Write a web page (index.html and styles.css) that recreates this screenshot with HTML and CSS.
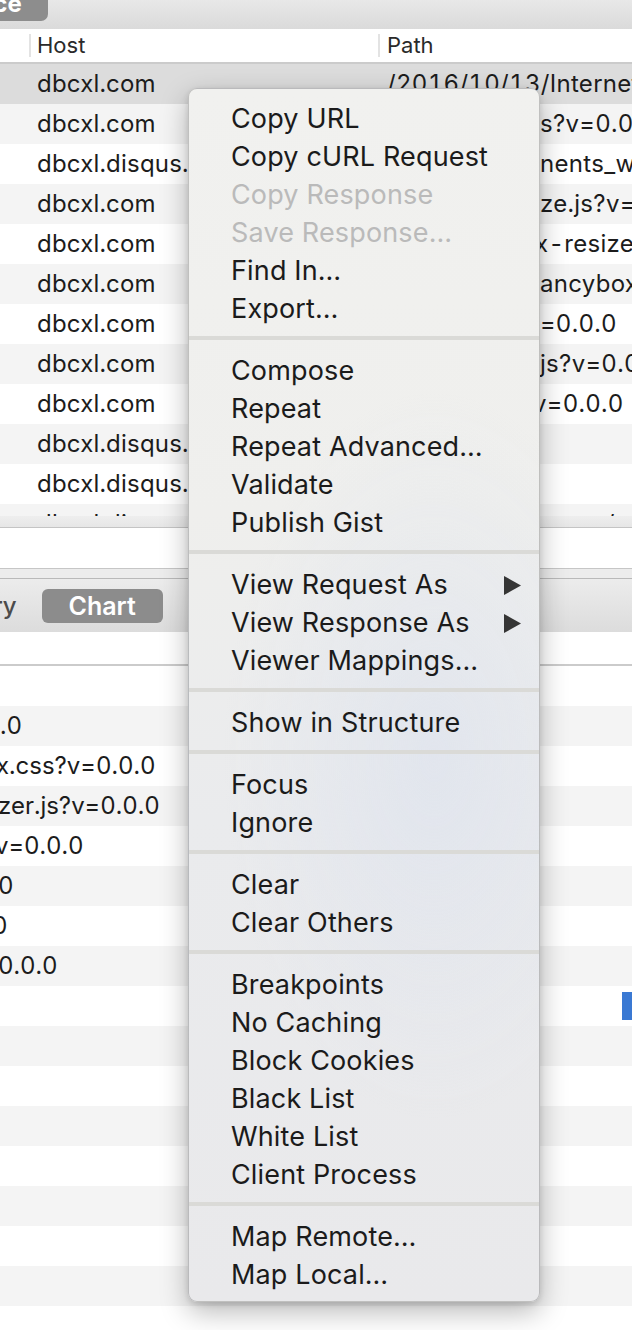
FILE: index.html
```html
<!DOCTYPE html>
<html lang="en">
<head>
<meta charset="utf-8">
<title>Charles – Sequence</title>
<link rel="stylesheet" href="styles.css">
</head>
<body>
<div class="app">
  <div class="toolbar">
    <span class="seg">Sequence</span>
  </div>

  <div class="thead">
    <div class="th th-icon"></div>
    <div class="th th-host">Host</div>
    <div class="th th-path">Path</div>
  </div>

  <div class="tbody upper">
    <div class="row selected"><div class="td td-icon"></div><div class="td td-host">dbcxl.com</div><div class="td td-path">/2016/10/13/Internet-Explorer-11/</div></div>
    <div class="row"><div class="td td-icon"></div><div class="td td-host">dbcxl.com</div><div class="td td-path"><span class="under">/wp-content/themes/dbcxl/main.j</span>s?v=0.0.0</div></div>
    <div class="row"><div class="td td-icon"></div><div class="td td-host">dbcxl.disqus.com</div><div class="td td-path"><span class="under">/count-data.js?1=com</span>nents_widget</div></div>
    <div class="row"><div class="td td-icon"></div><div class="td td-host">dbcxl.com</div><div class="td td-path"><span class="under">/wp-content/js/autosi</span>ze.js?v=0.0.0</div></div>
    <div class="row"><div class="td td-icon"></div><div class="td td-host">dbcxl.com</div><div class="td td-path"><span class="under part-a">/wp-content/js/fancybo</span>x-resizer.js</div></div>
    <div class="row"><div class="td td-icon"></div><div class="td td-host">dbcxl.com</div><div class="td td-path"><span class="under">/wp-content/js/jquery.f</span>ancybox.js</div></div>
    <div class="row"><div class="td td-icon"></div><div class="td td-host">dbcxl.com</div><div class="td td-path"><span class="under">/wp-content/style.css?v</span>=0.0.0</div></div>
    <div class="row"><div class="td td-icon"></div><div class="td td-host">dbcxl.com</div><div class="td td-path"><span class="under">/wp-content/js/comment.</span>js?v=0.0.0</div></div>
    <div class="row"><div class="td td-icon"></div><div class="td td-host">dbcxl.com</div><div class="td td-path"><span class="under part-b">/wp-content/js/prism.js?</span>v=0.0.0</div></div>
    <div class="row"><div class="td td-icon"></div><div class="td td-host">dbcxl.disqus.com</div><div class="td td-path"></div></div>
    <div class="row"><div class="td td-icon"></div><div class="td td-host">dbcxl.disqus.com</div><div class="td td-path"></div></div>
    <div class="row"><div class="td td-icon"></div><div class="td td-host">dbcxl.disqus.com</div><div class="td td-path">/embed/comments/</div></div>
  </div>
  <div class="hscroll"></div>

  <div class="blank"></div>
  <div class="split"></div>

  <div class="tabbar">
    <span class="tab tab-cut">Summary</span>
    <span class="tab active">Chart</span>
  </div>

  <div class="lhead"></div>

  <div class="tbody lower">
    <div class="lrow"><span class="lt"></span></div>
    <div class="lrow"><span class="lt">.0</span></div>
    <div class="lrow"><span class="lt cut-x">x.css?v=0.0.0</span></div>
    <div class="lrow"><span class="lt cut-z">zer.js?v=0.0.0</span></div>
    <div class="lrow"><span class="lt cut-v">v=0.0.0</span></div>
    <div class="lrow"><span class="lt cut-1">0</span></div>
    <div class="lrow"><span class="lt cut-half">0</span></div>
    <div class="lrow"><span class="lt cut-1">0.0.0</span></div>
    <div class="lrow"><span class="lt"></span><span class="bar"></span></div>
    <div class="lrow"></div>
    <div class="lrow"></div>
    <div class="lrow"></div>
    <div class="lrow"></div>
    <div class="lrow"></div>
    <div class="lrow"></div>
    <div class="lrow"></div>
    <div class="lrow"></div>
  </div>
</div>

<div class="menu">
  <div class="mi">Copy URL</div>
  <div class="mi">Copy cURL Request</div>
  <div class="mi disabled">Copy Response</div>
  <div class="mi disabled">Save Response…</div>
  <div class="mi">Find In…</div>
  <div class="mi">Export…</div>
  <div class="msep"></div>
  <div class="mi">Compose</div>
  <div class="mi">Repeat</div>
  <div class="mi">Repeat Advanced…</div>
  <div class="mi">Validate</div>
  <div class="mi">Publish Gist</div>
  <div class="msep"></div>
  <div class="mi">View Request As<svg class="arrow" viewBox="0 0 17 19"><polygon points="0,0 17,9.5 0,19"/></svg></div>
  <div class="mi">View Response As<svg class="arrow" viewBox="0 0 17 19"><polygon points="0,0 17,9.5 0,19"/></svg></div>
  <div class="mi">Viewer Mappings…</div>
  <div class="msep"></div>
  <div class="mi">Show in Structure</div>
  <div class="msep"></div>
  <div class="mi">Focus</div>
  <div class="mi">Ignore</div>
  <div class="msep"></div>
  <div class="mi">Clear</div>
  <div class="mi">Clear Others</div>
  <div class="msep"></div>
  <div class="mi">Breakpoints</div>
  <div class="mi">No Caching</div>
  <div class="mi">Block Cookies</div>
  <div class="mi">Black List</div>
  <div class="mi">White List</div>
  <div class="mi">Client Process</div>
  <div class="msep"></div>
  <div class="mi">Map Remote…</div>
  <div class="mi">Map Local…</div>
</div>
</body>
</html>
```

FILE: styles.css
```css
* {
  box-sizing: border-box;
  margin: 0;
  padding: 0;
}

html, body {
  width: 632px;
  height: 1330px;
  overflow: hidden;
  background: #ffffff;
}

body {
  position: relative;
  font-family: Inter, "Noto Sans", "Liberation Sans", sans-serif;
  color: #1c1c1c;
}

.app {
  display: flex;
  flex-direction: column;
  width: 632px;
  height: 1330px;
  overflow: hidden;
}

/* ---------- toolbar ---------- */
.toolbar {
  height: 29px;
  flex: none;
  background: linear-gradient(#e8e8e8, #dadada);
  display: flex;
  align-items: flex-start;
}

.seg {
  flex: none;
  height: 34px;
  margin-top: -13px;
  margin-left: -122px;
  padding: 0 26px;
  border-radius: 0 0 7px 0;
  background: #8d8d8d;
  color: #ffffff;
  font-size: 24px;
  font-weight: 700;
  line-height: 34px;
  white-space: nowrap;
}

/* ---------- upper table ---------- */
.thead {
  flex: none;
  height: 35px;
  display: flex;
  align-items: center;
  background: #ffffff;
  border-bottom: 2px solid #cbcbcb;
}

.th {
  height: 23px;
  line-height: 23px;
  font-size: 22px;
  color: #2a2a2a;
  white-space: nowrap;
}

.th-icon {
  width: 29px;
}

.th-host {
  width: 349px;
  padding-left: 6px;
  border-left: 2px solid #e3e3e3;
}

.th-path {
  flex: 1;
  padding-left: 7px;
  border-left: 2px solid #e3e3e3;
}

.tbody {
  flex: none;
  overflow: hidden;
}

.upper {
  height: 452px;
}

.row {
  display: flex;
  height: 40px;
  line-height: 40px;
  font-size: 24px;
  white-space: nowrap;
  background: #ffffff;
  font-variant-numeric: tabular-nums;
}

.row:nth-child(even) {
  background: #f4f4f4;
}

.row.selected {
  background: #dcdcdc;
}

.td-icon {
  width: 29px;
  flex: none;
}

.td-host {
  width: 349px;
  flex: none;
  padding-left: 8px;
  overflow: hidden;
  letter-spacing: 0.2px;
}

.td-path {
  flex: 1;
  padding-left: 9px;
  overflow: hidden;
  letter-spacing: 0.3px;
}

.under {
  display: inline-block;
  width: 153px;
  overflow: hidden;
  vertical-align: top;
  white-space: nowrap;
}

.under.part-a {
  width: 148px;
}

.under.part-b {
  width: 146px;
}

.hscroll {
  flex: none;
  height: 12px;
  background: linear-gradient(#eeeeee, #e6e6e6);
  border-bottom: 1px solid #c4c4c4;
}

.blank {
  flex: none;
  height: 41px;
  background: #ffffff;
  border-bottom: 1px solid #c6c6c6;
}

.split {
  flex: none;
  height: 10px;
  background: #ececec;
  border-bottom: 1px solid #b9b9b9;
}

/* ---------- tab bar ---------- */
.tabbar {
  flex: none;
  height: 53px;
  display: flex;
  align-items: center;
  gap: 25px;
  background: linear-gradient(#ececec, #dcdcdc);
  white-space: nowrap;
}

.tab {
  font-size: 24px;
  font-weight: 500;
  color: #4b4b4b;
}

.tab-cut {
  margin-left: -93px;
}

.tab.active {
  width: 121px;
  height: 34px;
  line-height: 34px;
  text-align: center;
  border-radius: 6px;
  background: #8c8c8c;
  color: #ffffff;
  font-weight: 600;
  font-size: 25px;
}

/* ---------- lower table ---------- */
.lhead {
  flex: none;
  height: 34px;
  background: #ffffff;
  border-bottom: 2px solid #cbcbcb;
}

.lower {
  flex: 1;
}

.lrow {
  display: flex;
  align-items: center;
  height: 40px;
  line-height: 40px;
  font-size: 24px;
  white-space: nowrap;
  overflow: hidden;
  background: #ffffff;
  font-variant-numeric: tabular-nums;
}

.lrow:nth-child(even) {
  background: #f4f4f4;
}

.lt {
  flex: none;
}

.cut-x {
  margin-left: -4px;
}

.cut-z {
  margin-left: -2px;
}

.cut-v {
  margin-left: -5px;
}

.cut-1 {
  margin-left: -2px;
}

.cut-half {
  margin-left: -8px;
}

.bar {
  margin-left: auto;
  width: 10px;
  height: 28px;
  background: #3a79d3;
}

/* ---------- context menu ---------- */
.menu {
  position: absolute;
  left: 188px;
  top: 88px;
  width: 352px;
  padding: 11px 0 7px;
  border: 1px solid rgba(0, 0, 0, 0.2);
  border-radius: 9px;
  background:
    radial-gradient(ellipse 60% 30% at 70% 55%, rgba(214, 222, 238, 0.45), rgba(214, 222, 238, 0) 100%),
    linear-gradient(180deg, #f1f1ef 0%, #efefed 35%, #eaebed 60%, #e9e9eb 100%);
  box-shadow: 0 10px 28px rgba(0, 0, 0, 0.28), 0 2px 6px rgba(0, 0, 0, 0.12);
  font-size: 27px;
  letter-spacing: 0.15px;
  color: #1b1b1b;
}

.mi {
  display: flex;
  align-items: center;
  justify-content: space-between;
  height: 38px;
  line-height: 38px;
  padding: 0 18px 0 42px;
  white-space: nowrap;
}

.mi.disabled {
  color: #bababa;
}

.arrow {
  width: 17px;
  height: 19px;
  fill: #353535;
}

.msep {
  height: 4px;
  margin: 8px 0 12px;
  background: #dadad7;
}
```
